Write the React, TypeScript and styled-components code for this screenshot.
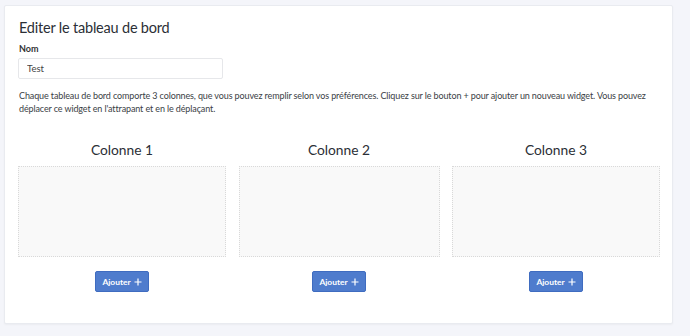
import styled, { createGlobalStyle } from "styled-components";

const GlobalStyle = createGlobalStyle`
  html, body {
    margin: 0;
    padding: 0;
    background: #f4f5fa;
  }
  body {
    font-family: "Lato", "Noto Sans", sans-serif;
    color: #2b2f36;
  }
`;

const Page = styled.main`
  padding: 5px 17px 12px 4px;
`;

const Card = styled.section`
  background: #ffffff;
  border: 1px solid #e9ebf0;
  border-radius: 2px;
  box-shadow: 0 1px 2px rgba(0, 0, 0, 0.04);
  padding: 12px 12px 31px 13px;
  height: 319px;
  box-sizing: border-box;
`;

const Title = styled.h2`
  margin: 0 0 5px 1px;
  font-size: 14.5px;
  font-weight: 400;
  letter-spacing: -0.2px;
  color: #2b2f36;
  line-height: 20px;
`;

const Label = styled.label`
  display: block;
  font-size: 9px;
  font-weight: 700;
  color: #333;
  margin: 0 0 4px 1px;
`;

const Input = styled.input`
  display: block;
  width: 205px;
  height: 21px;
  box-sizing: border-box;
  border: 1px solid #e6e7ea;
  border-radius: 2px;
  padding: 0 8px;
  font-family: inherit;
  font-size: 9.5px;
  color: #444;
  outline: none;
`;

const Help = styled.p`
  margin: 11px 0 0 1px;
  font-size: 9px;
  letter-spacing: -0.12px;
  line-height: 12.5px;
  color: #3a3e45;
`;

const Columns = styled.div`
  display: grid;
  grid-template-columns: 208px 201px 208px;
  justify-content: space-between;
  margin-top: 25px;
`;

const Column = styled.div`
  display: flex;
  flex-direction: column;
  align-items: center;
`;

const ColumnTitle = styled.h3`
  margin: 0 0 6px;
  font-size: 13.8px;
  font-weight: 400;
  line-height: 20px;
  color: #2b2f36;
`;

const DropZone = styled.div`
  width: 100%;
  height: 91px;
  box-sizing: border-box;
  background: #f9f9f9;
  border: 1px dotted #d9d9d9;
`;

const AddButton = styled.button`
  margin-top: 14px;
  display: flex;
  align-items: center;
  gap: 3px;
  height: 21px;
  padding: 0 6px;
  background: #4f7ccd;
  border: 1px solid #3f6cc0;
  border-radius: 2px;
  color: #fff;
  font-family: inherit;
  font-size: 8.4px;
  font-weight: 700;
  cursor: pointer;
`;

const Plus = styled.svg`
  width: 8px;
  height: 8px;
`;

const columns = ["Colonne 1", "Colonne 2", "Colonne 3"];

function App() {
  return (
    <>
      <GlobalStyle />
      <Page>
        <Card>
          <Title>Editer le tableau de bord</Title>
          <Label>Nom</Label>
          <Input defaultValue="Test" />
          <Help>
            Chaque tableau de bord comporte 3 colonnes, que vous pouvez remplir selon vos préférences. Cliquez sur le
            bouton + pour ajouter un nouveau widget. Vous pouvez déplacer ce widget en l'attrapant et en le déplaçant.
          </Help>
          <Columns>
            {columns.map((name) => (
              <Column key={name}>
                <ColumnTitle>{name}</ColumnTitle>
                <DropZone />
                <AddButton>
                  Ajouter
                  <Plus viewBox="0 0 8 8">
                    <path d="M4 0.5V7.5M0.5 4H7.5" stroke="#fff" strokeWidth="1.2" />
                  </Plus>
                </AddButton>
              </Column>
            ))}
          </Columns>
        </Card>
      </Page>
    </>
  );
}

export default App;
